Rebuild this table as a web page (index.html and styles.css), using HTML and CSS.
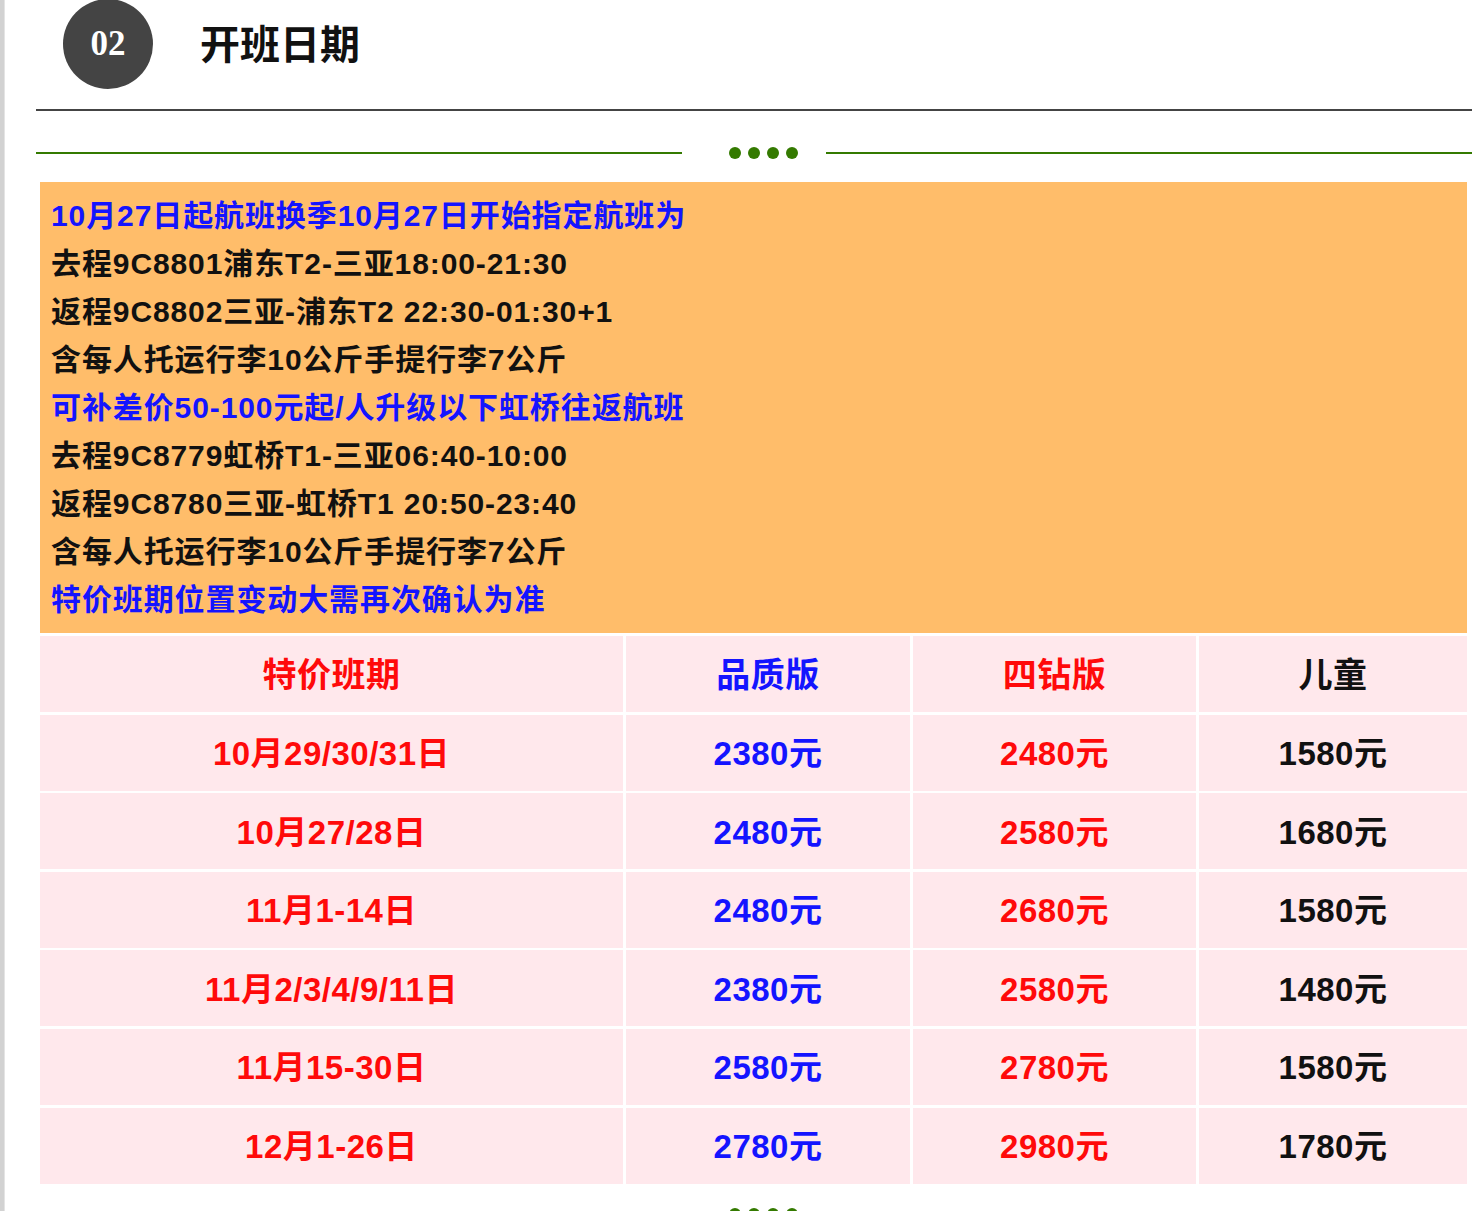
FILE: index.html
```html
<!DOCTYPE html>
<html lang="zh-CN">
<head>
<meta charset="utf-8">
<title>开班日期</title>
<link rel="stylesheet" href="styles.css">
</head>
<body>
<div class="page">
  <div class="section">
    <div class="head">
      <div class="num">02</div>
      <h2 class="title">开班日期</h2>
    </div>
    <div class="rule"></div>
    <div class="divider">
      <span class="line"></span>
      <span class="dots"><i></i><i></i><i></i><i></i></span>
      <span class="line"></span>
    </div>
    <div class="notice">
      <p class="blue">10月27日起航班换季10月27日开始指定航班为</p>
      <p>去程9C8801浦东T2-三亚18:00-21:30</p>
      <p>返程9C8802三亚-浦东T2 22:30-01:30+1</p>
      <p>含每人托运行李10公斤手提行李7公斤</p>
      <p class="blue">可补差价50-100元起/人升级以下虹桥往返航班</p>
      <p>去程9C8779虹桥T1-三亚06:40-10:00</p>
      <p>返程9C8780三亚-虹桥T1 20:50-23:40</p>
      <p>含每人托运行李10公斤手提行李7公斤</p>
      <p class="blue">特价班期位置变动大需再次确认为准</p>
    </div>
    <div class="table">
      <div class="cell th red">特价班期</div>
      <div class="cell th blue">品质版</div>
      <div class="cell th red">四钻版</div>
      <div class="cell th black">儿童</div>

      <div class="cell red">10月29/30/31日</div>
      <div class="cell blue">2380元</div>
      <div class="cell red">2480元</div>
      <div class="cell black">1580元</div>

      <div class="cell red">10月27/28日</div>
      <div class="cell blue">2480元</div>
      <div class="cell red">2580元</div>
      <div class="cell black">1680元</div>

      <div class="cell red">11月1-14日</div>
      <div class="cell blue">2480元</div>
      <div class="cell red">2680元</div>
      <div class="cell black">1580元</div>

      <div class="cell red">11月2/3/4/9/11日</div>
      <div class="cell blue">2380元</div>
      <div class="cell red">2580元</div>
      <div class="cell black">1480元</div>

      <div class="cell red">11月15-30日</div>
      <div class="cell blue">2580元</div>
      <div class="cell red">2780元</div>
      <div class="cell black">1580元</div>

      <div class="cell red">12月1-26日</div>
      <div class="cell blue">2780元</div>
      <div class="cell red">2980元</div>
      <div class="cell black">1780元</div>
    </div>
    <div class="divider bottom">
      <span class="line"></span>
      <span class="dots"><i></i><i></i><i></i><i></i></span>
      <span class="line"></span>
    </div>
  </div>
</div>
</body>
</html>
```

FILE: styles.css
```css
html, body {
  margin: 0;
  padding: 0;
  background: #ffffff;
}

body {
  font-family: "Liberation Sans", "Noto Sans CJK SC", sans-serif;
  overflow: hidden;
}

.page {
  min-height: 1211px;
  border-left: 4px solid #d2d2d2;
  box-shadow: inset 1px 0 0 #e4e4e4;
}

.section {
  margin-left: 32px;
  width: 1436px;
}

.head {
  display: flex;
  align-items: flex-start;
  height: 109px;
}

.num {
  width: 90px;
  height: 90px;
  margin-top: -1px;
  margin-left: 27px;
  border-radius: 50%;
  background: #444444;
  color: #ffffff;
  font-family: "Liberation Serif", serif;
  font-weight: bold;
  font-size: 35px;
  line-height: 90px;
  text-align: center;
}

.title {
  margin: 0 0 0 47px;
  font-size: 40px;
  line-height: 90px;
  font-weight: bold;
  color: #111111;
}

.rule {
  height: 2px;
  background: #444444;
}

.divider {
  display: flex;
  align-items: center;
  height: 12px;
  margin-top: 36px;
}

.divider .line {
  width: 646px;
  height: 2px;
  background: #347a00;
}

.divider .line:last-child {
  flex: 1;
}

.dots {
  display: flex;
  gap: 7px;
  margin: 0 28px 0 47px;
}

.dots i {
  display: block;
  width: 12px;
  height: 12px;
  border-radius: 50%;
  background: #347a00;
}

.divider.bottom {
  margin-top: 24px;
}

.notice {
  margin: 23px 5px 0 4px;
  padding: 10px 11px 9px;
  background: #ffbd6a;
}

.notice p {
  margin: 0;
  font-size: 30px;
  line-height: 48px;
  font-weight: bold;
  color: #111111;
  letter-spacing: 0.9px;
  white-space: nowrap;
}

.notice p.blue {
  color: #1414ff;
}

.table {
  display: grid;
  grid-template-columns: 583px 284px 283px 1fr;
  grid-auto-rows: 76px;
  gap: 2.6px 3px;
  margin: 3px 5px 0 4px;
}

.cell {
  display: flex;
  align-items: center;
  justify-content: center;
  padding-bottom: 3px;
  box-sizing: border-box;
  background: #ffe8ec;
  font-size: 33px;
  font-weight: bold;
  letter-spacing: 0.5px;
}

.cell.th {
  font-size: 34px;
}

.cell.red {
  color: #ff0a0a;
}

.cell.blue {
  color: #1414ff;
}

.cell.black {
  color: #111111;
}
```
